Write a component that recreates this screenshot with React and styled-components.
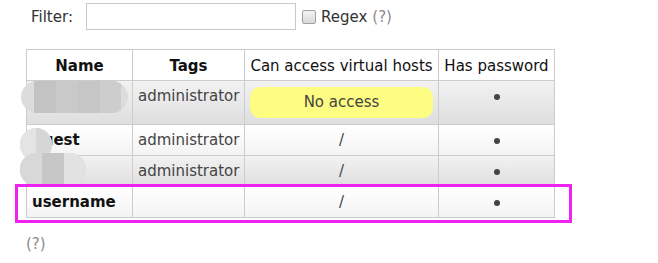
import React from 'react';
import styled, { createGlobalStyle } from 'styled-components';

const GlobalStyle = createGlobalStyle`
  html, body {
    margin: 0;
    padding: 0;
    background: #ffffff;
  }
  body {
    font-family: "DejaVu Sans", Verdana, sans-serif;
    font-size: 15px;
    color: #444444;
  }
`;

const Page = styled.div`
  position: relative;
  width: 658px;
  height: 263px;
  padding-top: 3px;
  box-sizing: border-box;
`;

const FilterRow = styled.div`
  display: flex;
  align-items: center;
  padding-left: 31px;
  height: 27px;
`;

const FilterLabel = styled.label`
  color: #333333;
  margin-right: 13px;
`;

const FilterInput = styled.input`
  width: 210px;
  height: 27px;
  box-sizing: border-box;
  border: 1px solid #c8c8c8;
  margin: 0;
  padding: 0 4px;
  font: inherit;
`;

const Check = styled.span`
  display: inline-block;
  width: 12px;
  height: 12px;
  margin: 0 5px 0 6px;
  border: 1px solid #a0a0a0;
  border-radius: 2px;
  background: linear-gradient(#f4f4f4, #d8d8d8);
`;

const RegexText = styled.span`
  color: #333333;
`;

const Help = styled.span`
  color: #8a8a8a;
  margin-left: ${(p) => p.$gap || 0}px;
`;

const Table = styled.table`
  margin: 19px 0 0 26px;
  border-collapse: collapse;
  table-layout: fixed;
  width: 528px;
`;

const Th = styled.th`
  width: ${(p) => p.$w}px;
  height: 31px;
  padding: 2px 2px 0;
  box-sizing: border-box;
  border: 1px solid #cccccc;
  background: #ffffff;
  color: #111111;
  font-weight: ${(p) => (p.$bold ? 700 : 400)};
  text-align: center;
  white-space: nowrap;
  overflow: hidden;
`;

const Tr = styled.tr`
  background: ${(p) => (p.$alt
    ? 'linear-gradient(#f2f2f2, #dedede)'
    : 'linear-gradient(#ffffff, #f3f3f3)')};
`;

const Td = styled.td`
  position: relative;
  border: 1px solid #cccccc;
  padding: 6px 5px;
  height: 18px;
  line-height: 18px;
  vertical-align: top;
  text-align: ${(p) => p.$align || 'left'};
  white-space: nowrap;
`;

const UserName = styled.span`
  font-weight: 700;
  color: #111111;
`;

const Pill = styled.div`
  background: #fdfd82;
  border-radius: 10px;
  height: 31px;
  line-height: 31px;
  text-align: center;
`;

const Dot = styled.span`
  display: inline-block;
  width: 6px;
  height: 6px;
  border-radius: 50%;
  background: #444444;
  vertical-align: middle;
  margin-top: ${(p) => p.$drop || 0}px;
`;

const Blob = styled.div`
  position: absolute;
  left: ${(p) => p.$x}px;
  top: ${(p) => p.$y}px;
  width: ${(p) => p.$w}px;
  height: ${(p) => p.$h}px;
  border-radius: ${(p) => p.$r}px;
  background: ${(p) => p.$bg || '#dddddd'};
  overflow: hidden;
  display: flex;
`;

const Tile = styled.div`
  flex: ${(p) => p.$grow || 1};
  background: ${(p) => p.$c};
`;

const Highlight = styled.div`
  position: absolute;
  left: 15px;
  top: 184px;
  width: 557px;
  height: 39px;
  box-sizing: border-box;
  border: 3px solid #f022f0;
`;

const FootHelp = styled.div`
  margin: 17px 0 0 26px;
  color: #8a8a8a;
`;

const rows = [
  { name: null, tags: 'administrator', access: 'none', alt: true },
  { name: 'guest', tags: 'administrator', access: '/', alt: false },
  { name: null, tags: 'administrator', access: '/', alt: true },
  { name: 'username', tags: '', access: '/', alt: false },
];

const App = () => (
  <Page>
    <GlobalStyle />
    <FilterRow>
      <FilterLabel>Filter:</FilterLabel>
      <FilterInput type="text" />
      <Check />
      <RegexText>Regex</RegexText>
      <Help $gap={5}>(?)</Help>
    </FilterRow>
    <Table>
      <thead>
        <tr>
          <Th $w={106} $bold>Name</Th>
          <Th $w={112} $bold>Tags</Th>
          <Th $w={194}>Can access virtual hosts</Th>
          <Th $w={116}>Has password</Th>
        </tr>
      </thead>
      <tbody>
        {rows.map((r, i) => (
          <Tr key={i} $alt={r.alt}>
            <Td>{r.name ? <UserName>{r.name}</UserName> : ''}</Td>
            <Td>{r.tags}</Td>
            <Td $align="center">
              {r.access === 'none' ? <Pill>No access</Pill> : r.access}
            </Td>
            <Td $align="center"><Dot $drop={1} /></Td>
          </Tr>
        ))}
      </tbody>
    </Table>
    <FootHelp>(?)</FootHelp>

    <Blob $x={21} $y={81} $w={107} $h={32} $r={16} $bg="#dcdcdc">
      <Tile $c="transparent" $grow={0.6} />
      <Tile $c="#c3c3c3" />
      <Tile $c="#c9c9c9" />
      <Tile $c="#c6c6c6" />
      <Tile $c="#cdcdcd" />
      <Tile $c="transparent" $grow={0.3} />
    </Blob>
    <Blob $x={20} $y={128} $w={32} $h={33} $r={16} $bg="#e2e2e2">
      <Tile $c="#e4e4e4" />
      <Tile $c="#d6d6d6" />
    </Blob>
    <Blob $x={20} $y={153} $w={66} $h={33} $r={16} $bg="#dadada">
      <Tile $c="#d8d8d8" />
      <Tile $c="#c6c6c6" />
      <Tile $c="#e2e2e2" />
    </Blob>
    <Highlight />
  </Page>
);

export default App;
